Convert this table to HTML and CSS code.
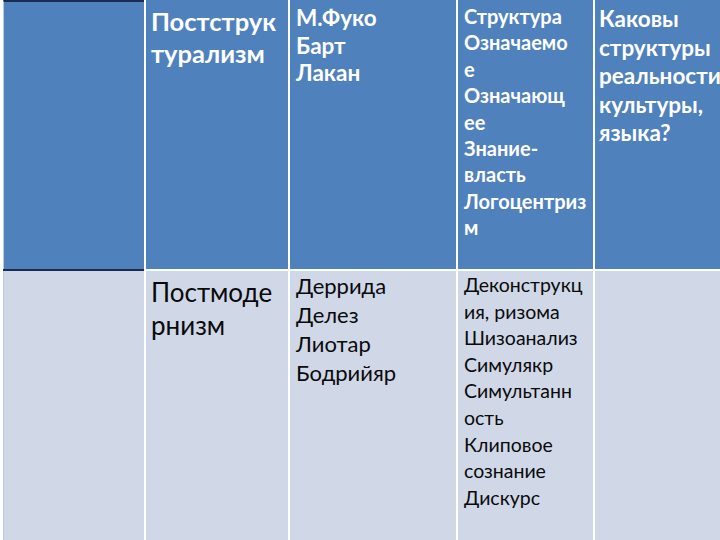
FILE: index.html
```html
<!DOCTYPE html>
<html lang="ru">
<head>
<meta charset="utf-8">
<title>Таблица</title>
<link rel="stylesheet" href="styles.css">
</head>
<body>
<div class="table">
  <div class="cell head first"></div>
  <div class="cell head c2">Постструк<br>турализм</div>
  <div class="cell head c3">М.Фуко<br>Барт<br>Лакан</div>
  <div class="cell head c4">Структура<br>Означаемо<br>е<br>Означающ<br>ее<br>Знание-<br>власть<br>Логоцентриз<br>м</div>
  <div class="cell head c5">Каковы<br>структуры<br>реальности<br>культуры,<br>языка?</div>

  <div class="cell body first"></div>
  <div class="cell body c2">Постмоде<br>рнизм</div>
  <div class="cell body c3">Деррида<br>Делез<br>Лиотар<br>Бодрийяр</div>
  <div class="cell body c4">Деконструкц<br>ия, ризома<br>Шизоанализ<br>Симулякр<br>Симультанн<br>ость<br>Клиповое<br>сознание<br>Дискурс</div>
  <div class="cell body c5"></div>
</div>
</body>
</html>
```
FILE: styles.css
```css
html, body {
  margin: 0;
  padding: 0;
  width: 720px;
  height: 540px;
  overflow: hidden;
  background: #ffffff;
}

.table {
  display: grid;
  grid-template-columns: 144px 142px 166px 135px 150px;
  grid-template-rows: 269px 269px;
  column-gap: 2px;
  row-gap: 2px;
  background: #ffffff;
  font-family: Lato, "Liberation Sans", sans-serif;
  white-space: nowrap;
}

.head {
  background: #4f81bd;
  color: #ffffff;
  font-weight: 700;
}

.body {
  background: #d0d8e8;
  color: #0a0a0a;
  font-weight: 400;
}

.first.head {
  border-top: 2px solid #1b2c52;
  box-shadow: 0 2px 0 #1b2c52;
}

.first {
  border-left: 1px solid #b9c9e2;
  margin-left: 3px;
}

.head.c2 { font-size: 25.5px; line-height: 32px; padding: 5px 0 0 5px; }
.head.c3 { font-size: 22.5px; line-height: 27.5px; padding: 4px 0 0 6px; }
.head.c4 { font-size: 20px; line-height: 26.4px; padding: 3px 0 0 6px; }
.head.c5 { font-size: 22.5px; line-height: 28.5px; padding: 5px 0 0 4px; }

.body.c2 { font-size: 26px; line-height: 33px; padding: 5px 0 0 5px; }
.body.c3 { font-size: 22px; line-height: 29px; padding: 0 0 0 6px; }
.body.c4 { font-size: 19.5px; line-height: 26.6px; padding: 1px 0 0 6px; }
```
